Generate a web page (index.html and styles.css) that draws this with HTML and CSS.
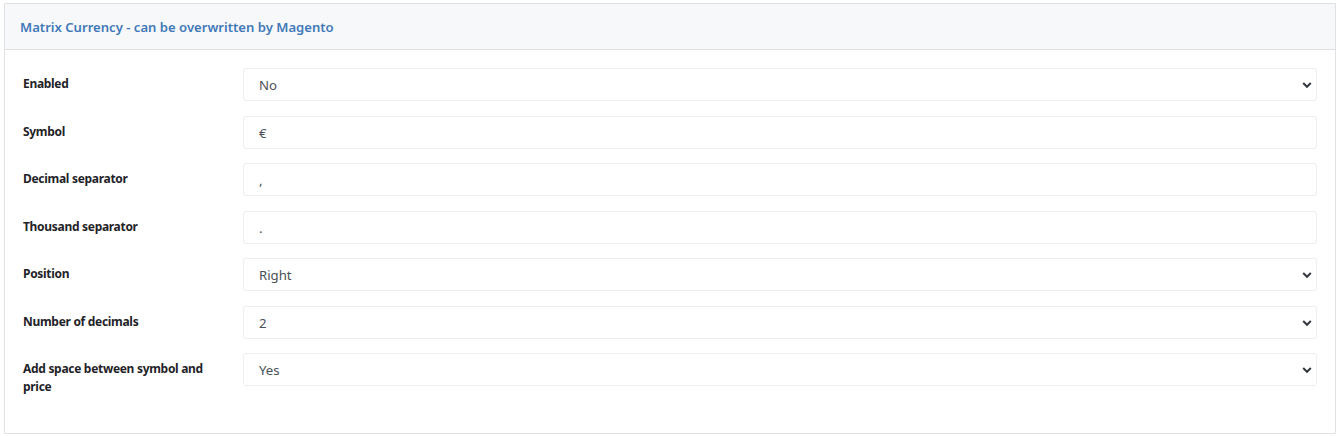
FILE: index.html
```html
<!DOCTYPE html>
<html>
<head>
<meta charset="utf-8">
<link rel="stylesheet" href="styles.css">
</head>
<body>
<div class="page">
  <section class="card">
    <header class="card-header">
      <h2 class="card-title">Matrix Currency - can be overwritten by Magento</h2>
    </header>
    <div class="card-body">
      <div class="row">
        <label class="label">Enabled</label>
        <div class="control select"><span>No</span><svg class="chev" viewBox="0 0 10 8"><path d="M1.2 2 L5 5.8 L8.8 2" /></svg></div>
      </div>
      <div class="row">
        <label class="label">Symbol</label>
        <div class="control"><span>€</span></div>
      </div>
      <div class="row">
        <label class="label">Decimal separator</label>
        <div class="control"><span>,</span></div>
      </div>
      <div class="row">
        <label class="label">Thousand separator</label>
        <div class="control"><span>.</span></div>
      </div>
      <div class="row">
        <label class="label">Position</label>
        <div class="control select"><span>Right</span><svg class="chev" viewBox="0 0 10 8"><path d="M1.2 2 L5 5.8 L8.8 2" /></svg></div>
      </div>
      <div class="row">
        <label class="label">Number of decimals</label>
        <div class="control select"><span>2</span><svg class="chev" viewBox="0 0 10 8"><path d="M1.2 2 L5 5.8 L8.8 2" /></svg></div>
      </div>
      <div class="row">
        <label class="label">Add space between symbol and price</label>
        <div class="control select"><span>Yes</span><svg class="chev" viewBox="0 0 10 8"><path d="M1.2 2 L5 5.8 L8.8 2" /></svg></div>
      </div>
    </div>
  </section>
</div>
</body>
</html>
```

FILE: styles.css
```css
* { box-sizing: border-box; }
html, body { margin: 0; padding: 0; background: #fff; }
body {
  font-family: "Noto Sans", "Open Sans", "Liberation Sans", sans-serif;
  color: #212529;
}
.page { padding: 3px 4px 2px 4px; }
.card {
  border: 1px solid #dfe1e5;
  border-radius: 1px;
  background: #fff;
  height: 431px;
}
.card-header {
  background: #f7f8fa;
  border-bottom: 1px solid #dfe1e5;
  height: 46px;
  padding: 0 15px;
  display: flex;
  align-items: center;
}
.card-title {
  margin: 0;
  font-size: 13.1px;
  font-weight: 600;
  color: #4179b8;
}
.card-body {
  padding: 18px 18px 22px 18px;
}
.row {
  display: grid;
  grid-template-columns: 220px 1fr;
  margin-bottom: 14.5px;
}
.label {
  font-size: 12px;
  font-weight: 700;
  line-height: 18px;
  padding: 7px 20px 0 0;
  color: #1f2328;
  letter-spacing: -0.3px;
}
.control {
  height: 33px;
  border: 1px solid #eceef0;
  border-radius: 3px;
  display: flex;
  align-items: center;
  padding: 0 15px;
  font-size: 13.2px;
  color: #495057;
  position: relative;
}
.control span { padding-top: 1px; }
.chev {
  position: absolute;
  right: 4px;
  top: 12px;
  width: 10px;
  height: 8px;
}
.chev path {
  fill: none;
  stroke: #343a40;
  stroke-width: 2;
}
```
